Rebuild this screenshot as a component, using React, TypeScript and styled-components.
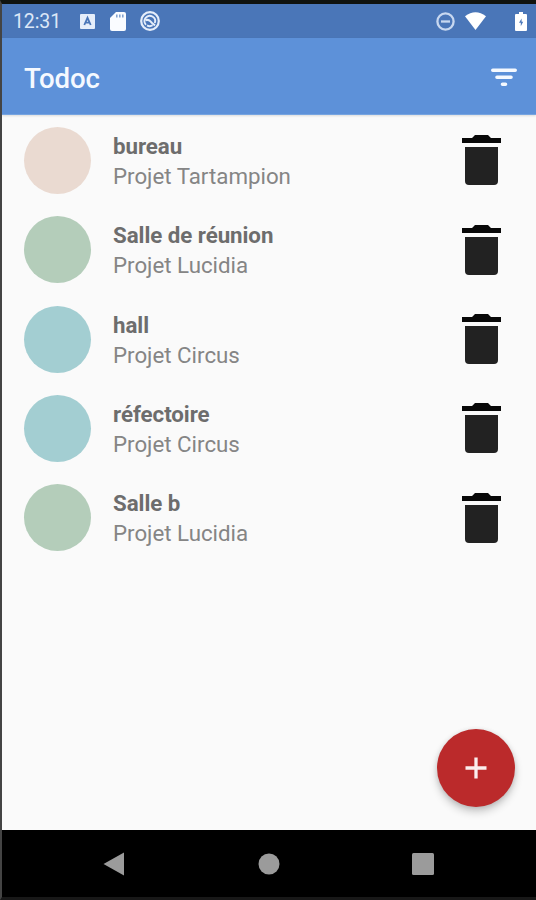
import React from "react";
import styled, { createGlobalStyle } from "styled-components";

const GlobalStyle = createGlobalStyle`
  * { box-sizing: border-box; }
  body { margin: 0; background: #fafafa; font-family: Roboto, sans-serif; }
  svg { display: block; }
`;

const Device = styled.div`
  width: 536px;
  height: 900px;
  display: flex;
  flex-direction: column;
  overflow: hidden;
  background: #fafafa;
  border-top: 4px solid #10130f;
  border-left: 2px solid #444;
  border-bottom: 3px solid #181818;
`;

const StatusBar = styled.header`
  height: 34px;
  flex: none;
  display: flex;
  align-items: center;
  padding: 0 9px 0 11px;
  background: #4a76b8;
  color: #e6eefa;
`;

const Clock = styled.span`
  width: 67px;
  padding-top: 2px;
  font-size: 19.5px;
  line-height: 32px;
  letter-spacing: -0.1px;
  color: #dce7f7;
`;

const StatusGroup = styled.div<{ $gap: number }>`
  display: flex;
  align-items: center;
  gap: ${(p) => p.$gap}px;
`;

const Spacer = styled.div`
  flex: 1;
`;

const BatterySlot = styled.div`
  margin-left: 29px;
`;

const AppBar = styled.div`
  position: relative;
  height: 77px;
  flex: none;
  display: flex;
  align-items: center;
  justify-content: space-between;
  padding: 2px 19px 0 22px;
  background: #5d91d9;
  border-bottom: 1px solid #76a4e0;
  box-shadow: 0 1px 2px rgba(0, 0, 0, 0.12);
`;

const Title = styled.h1`
  margin: 4px 0 0;
  font-size: 27.6px;
  font-weight: 500;
  line-height: 36px;
  letter-spacing: -0.05px;
  color: #f5f9ff;
`;

const IconButton = styled.button`
  padding: 0;
  border: 0;
  background: none;
  color: inherit;
`;

const Content = styled.main`
  position: relative;
  flex: 1;
`;

const TaskList = styled.ul`
  margin: 0;
  padding: 0.8px 0 0;
  list-style: none;
`;

const TaskRow = styled.li`
  height: 89.3px;
  display: flex;
  align-items: center;
  padding: 0 35px 0 22px;
`;

const ProjectDot = styled.span<{ $color: string }>`
  width: 67px;
  height: 67px;
  flex: none;
  border-radius: 50%;
  background: ${(p) => p.$color};
`;

const TaskText = styled.div`
  flex: 1;
  margin: 1px 0 0 22px;
  line-height: 30px;
  font-size: 22.3px;
`;

const TaskName = styled.div`
  font-weight: 700;
  letter-spacing: -0.05px;
  color: #6d6d6d;
`;

const ProjectName = styled.div`
  color: #858585;
`;

const AddButton = styled.button`
  position: absolute;
  right: 21px;
  bottom: 23px;
  width: 78px;
  height: 78px;
  padding: 0;
  border: 0;
  border-radius: 50%;
  display: grid;
  place-items: center;
  background: #bb2a2b;
  box-shadow: 0 5px 8px rgba(0, 0, 0, 0.2), 0 1px 5px rgba(0, 0, 0, 0.12);
`;

const NavBar = styled.nav`
  height: 67px;
  flex: none;
  display: grid;
  grid-template-columns: repeat(3, 154.5px);
  justify-content: center;
  align-items: center;
  justify-items: center;
  padding-right: 1px;
  background: #000;
  color: #9b9b9b;
`;

const KeyboardIcon = () => (
  <svg width="15" height="15" viewBox="0 0 15 15">
    <rect width="15" height="15" rx="1" fill="currentColor" />
    <path d="M4.3 11 7.5 3.8 10.7 11M5.5 8.6h4" fill="none" stroke="#4a76b8" strokeWidth="1.8" />
  </svg>
);

const SdCardIcon = () => (
  <svg width="16" height="19" viewBox="0 0 16 19">
    <path d="M6 0h8q2 0 2 2v15q0 2-2 2H2q-2 0-2-2V6z" fill="#fafcff" />
    <path d="M6.8 2.5v3M9.8 2.5v3M12.8 2.5v3" stroke="#7f9fce" strokeWidth="1.5" />
  </svg>
);

const SyncIcon = () => (
  <svg width="20" height="20" viewBox="0 0 20 20" fill="none" stroke="currentColor">
    <circle cx="10" cy="10" r="8.8" strokeWidth="2.2" />
    <path d="M6 13.8A5.3 5.3 0 1 1 14.8 12" strokeWidth="1.9" />
    <path d="M5.5 9.2q3-1 4.7 1t4.8 4.2M7 14.4q3 1.6 5.6-.2" strokeWidth="2" />
  </svg>
);

const DoNotDisturbIcon = () => (
  <svg width="19" height="19" viewBox="0 0 19 19" fill="none" stroke="#c8d8f0" strokeWidth="2.3">
    <circle cx="9.5" cy="9.5" r="8.1" />
    <path d="M5 9.5h9" />
  </svg>
);

const WifiIcon = () => (
  <svg width="21" height="18" viewBox="0 0 21 18">
    <path d="M0 4.2Q10.5-3.8 21 4.2L10.5 18z" fill="#fff" />
  </svg>
);

const BatteryIcon = () => (
  <svg width="12" height="19" viewBox="0 0 12 19">
    <path d="M4 0h4v2h3q1 0 1 1v15q0 1-1 1H1q-1 0-1-1V3q0-1 1-1h3z" fill="#fff" />
    <path d="M6.6 6.5 4 10.7h1.8v3.5L8.2 9.8H6.6z" fill="#4a76b8" />
  </svg>
);

const FilterIcon = () => (
  <svg width="26" height="19" viewBox="0 0 26 19" stroke="#f5f9ff" strokeWidth="3.6" strokeLinecap="round">
    <path d="M1.8 2.3h22.4M6 9.3h14M11.5 16.3h3" />
  </svg>
);

const TrashIcon = () => (
  <svg width="39" height="50" viewBox="0 0 39 50">
    <path d="M0 3h10l3-3h13l3 3h10v5H0z" fill="#080808" />
    <path d="M3 12h33v34q0 4-4 4H7q-4 0-4-4z" fill="#222" />
  </svg>
);

const PlusIcon = () => (
  <svg width="22" height="22" viewBox="0 0 22 22" stroke="#fbeeee" strokeWidth="3.3">
    <path d="M11 .5v21M.5 11h21" />
  </svg>
);

const BackIcon = () => (
  <svg width="22" height="24" viewBox="0 0 22 24">
    <path d="M.5 12 21 .5v23z" fill="currentColor" />
  </svg>
);

const HomeIcon = () => (
  <svg width="22" height="22" viewBox="0 0 22 22">
    <circle cx="11" cy="11" r="10.5" fill="currentColor" />
  </svg>
);

const RecentsIcon = () => (
  <svg width="22" height="22" viewBox="0 0 22 22">
    <rect width="22" height="22" rx="1.5" fill="currentColor" />
  </svg>
);

const projects = {
  tartampion: { name: "Projet Tartampion", color: "#eadad1" },
  lucidia: { name: "Projet Lucidia", color: "#b4cdba" },
  circus: { name: "Projet Circus", color: "#a3ced2" },
};

const tasks = [
  { name: "bureau", project: projects.tartampion },
  { name: "Salle de réunion", project: projects.lucidia },
  { name: "hall", project: projects.circus },
  { name: "réfectoire", project: projects.circus },
  { name: "Salle b", project: projects.lucidia },
];

export default function App() {
  return (
    <>
      <GlobalStyle />
      <Device>
        <StatusBar>
          <Clock>12:31</Clock>
          <StatusGroup $gap={14.5}>
            <KeyboardIcon />
            <SdCardIcon />
            <SyncIcon />
          </StatusGroup>
          <Spacer />
          <StatusGroup $gap={10}>
            <DoNotDisturbIcon />
            <WifiIcon />
          </StatusGroup>
          <BatterySlot>
            <BatteryIcon />
          </BatterySlot>
        </StatusBar>
        <AppBar>
          <Title>Todoc</Title>
          <IconButton aria-label="Filtrer">
            <FilterIcon />
          </IconButton>
        </AppBar>
        <Content>
          <TaskList>
            {tasks.map((task) => (
              <TaskRow key={task.name}>
                <ProjectDot $color={task.project.color} />
                <TaskText>
                  <TaskName>{task.name}</TaskName>
                  <ProjectName>{task.project.name}</ProjectName>
                </TaskText>
                <IconButton aria-label="Supprimer">
                  <TrashIcon />
                </IconButton>
              </TaskRow>
            ))}
          </TaskList>
          <AddButton aria-label="Ajouter">
            <PlusIcon />
          </AddButton>
        </Content>
        <NavBar>
          <BackIcon />
          <HomeIcon />
          <RecentsIcon />
        </NavBar>
      </Device>
    </>
  );
}
